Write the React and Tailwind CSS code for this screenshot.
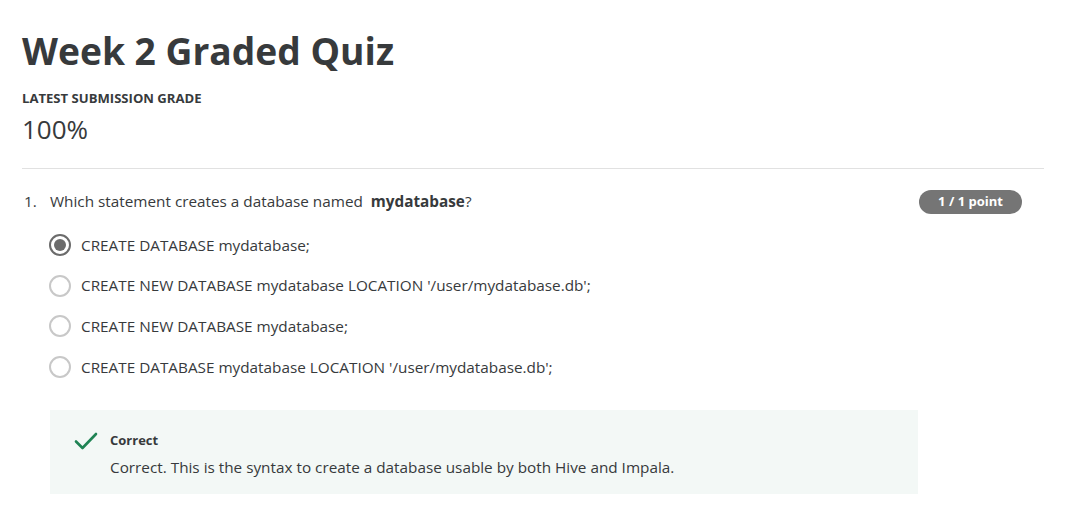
export default function App() {
  const options = [
    "CREATE DATABASE mydatabase;",
    "CREATE NEW DATABASE mydatabase LOCATION '/user/mydatabase.db';",
    "CREATE NEW DATABASE mydatabase;",
    "CREATE DATABASE mydatabase LOCATION '/user/mydatabase.db';",
  ];
  return (
    <div className="w-[1072px] h-[512px] bg-white overflow-hidden pl-[22px] pr-[28px] pt-[28px] text-[#1f1f1f]" style={{ fontFamily: "'Open Sans', sans-serif" }}>
      <h1 className="text-[37.2px] leading-[46px] font-bold text-[#373a3c]">Week 2 Graded Quiz</h1>
      <div className="mt-[16px] text-[13.1px] leading-[16px] font-bold text-[#373a3c]">LATEST SUBMISSION GRADE</div>
      <div className="mt-[7px] text-[26px] leading-[32px] text-[#373a3c]">100%</div>
      <div className="mt-[23px] h-px bg-[#e1e1e1]" />
      <div className="mt-[20px] flex items-start pr-[22px]">
        <div className="w-[28px] pl-[2px] text-[15.3px] leading-[24px] text-[#373a3c]">1.</div>
        <div className="flex-1 text-[15.3px] leading-[24px] text-[#373a3c]">
          Which statement creates a database named <span className="font-bold">&nbsp;mydatabase</span>?
        </div>
        <div className="mt-[1px] w-[103px] h-[24px] rounded-full bg-[#757575] text-white text-[13px] font-bold flex items-center justify-center">1 / 1 point</div>
      </div>
      <div className="mt-[19px] pl-[27px] flex flex-col gap-[16.7px]">
        {options.map((o, i) => (
          <div key={i} className="flex items-center h-[24px]">
            <div className={`w-[22px] h-[22px] rounded-full border-2 flex items-center justify-center ${i === 0 ? "border-[#6b6b6b]" : "border-[#c8c8c8]"}`}>
              {i === 0 && <div className="w-[12px] h-[12px] rounded-full bg-[#6b6b6b]" />}
            </div>
            <span className="ml-[10px] text-[15.3px] text-[#373a3c]">{o}</span>
          </div>
        ))}
      </div>
      <div className="mt-[31px] ml-[28px] w-[868px] h-[84px] bg-[#f3f8f6] flex pl-[24px] pt-[20px]">
        <svg width="24" height="24" viewBox="0 0 24 24" className="mt-[-1px]" fill="none" stroke="#1f8354" strokeWidth="2.6" strokeLinecap="round" strokeLinejoin="round">
          <path d="M2 12.5 L8.5 19 L22 5" />
        </svg>
        <div className="ml-[12px]">
          <div className="text-[13px] leading-[20px] font-bold text-[#373a3c]">Correct</div>
          <div className="mt-[7px] text-[15.3px] leading-[20px] text-[#373a3c]">Correct. This is the syntax to create a database usable by both Hive and Impala.</div>
        </div>
      </div>
    </div>
  );
}
